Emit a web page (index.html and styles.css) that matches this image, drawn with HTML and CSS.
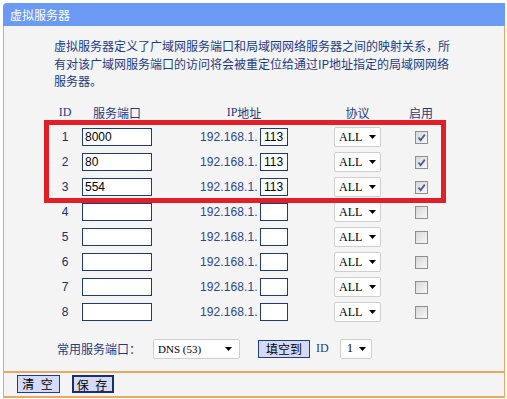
FILE: index.html
```html
<!DOCTYPE html>
<html lang="zh-CN">
<head>
<meta charset="utf-8">
<title>虚拟服务器</title>
<link rel="stylesheet" href="styles.css">
</head>
<body>
<div class="panel">
  <div class="header">虚拟服务器</div>
  <div class="content">
    <p class="intro">虚拟服务器定义了广域网服务端口和局域网网络服务器之间的映射关系，所<br>有对该广域网服务端口的访问将会被重定位给通过IP地址指定的局域网网络<br>服务器。</p>

    <div class="table">
      <div class="row head">
        <div class="c-id mono">ID</div>
        <div class="c-port">服务端口</div>
        <div class="c-ip"><span class="mono">IP</span>地址</div>
        <div class="c-proto">协议</div>
        <div class="c-en">启用</div>
      </div>

      <div class="row">
        <div class="c-id num">1</div>
        <div class="c-port"><input class="txt port" type="text" value="8000"></div>
        <div class="c-ip"><span class="ip">192.168.1.</span><input class="txt host" type="text" value="113"></div>
        <div class="c-proto"><div class="sel proto"><span>ALL</span><svg class="arr" width="7" height="4" viewBox="0 0 7 4"><path d="M0 0H7L3.5 4Z"/></svg></div></div>
        <div class="c-en"><span class="chk on"><svg width="11" height="11" viewBox="0 0 11 11"><path d="M2.5 5.5L4.6 8.2L8.8 2.6" fill="none" stroke="#4a5d92" stroke-width="1.8"/></svg></span></div>
      </div>
      <div class="row">
        <div class="c-id num">2</div>
        <div class="c-port"><input class="txt port" type="text" value="80"></div>
        <div class="c-ip"><span class="ip">192.168.1.</span><input class="txt host" type="text" value="113"></div>
        <div class="c-proto"><div class="sel proto"><span>ALL</span><svg class="arr" width="7" height="4" viewBox="0 0 7 4"><path d="M0 0H7L3.5 4Z"/></svg></div></div>
        <div class="c-en"><span class="chk on"><svg width="11" height="11" viewBox="0 0 11 11"><path d="M2.5 5.5L4.6 8.2L8.8 2.6" fill="none" stroke="#4a5d92" stroke-width="1.8"/></svg></span></div>
      </div>
      <div class="row">
        <div class="c-id num">3</div>
        <div class="c-port"><input class="txt port" type="text" value="554"></div>
        <div class="c-ip"><span class="ip">192.168.1.</span><input class="txt host" type="text" value="113"></div>
        <div class="c-proto"><div class="sel proto"><span>ALL</span><svg class="arr" width="7" height="4" viewBox="0 0 7 4"><path d="M0 0H7L3.5 4Z"/></svg></div></div>
        <div class="c-en"><span class="chk on"><svg width="11" height="11" viewBox="0 0 11 11"><path d="M2.5 5.5L4.6 8.2L8.8 2.6" fill="none" stroke="#4a5d92" stroke-width="1.8"/></svg></span></div>
      </div>
      <div class="row">
        <div class="c-id num">4</div>
        <div class="c-port"><input class="txt port" type="text" value=""></div>
        <div class="c-ip"><span class="ip">192.168.1.</span><input class="txt host" type="text" value=""></div>
        <div class="c-proto"><div class="sel proto"><span>ALL</span><svg class="arr" width="7" height="4" viewBox="0 0 7 4"><path d="M0 0H7L3.5 4Z"/></svg></div></div>
        <div class="c-en"><span class="chk"></span></div>
      </div>
      <div class="row">
        <div class="c-id num">5</div>
        <div class="c-port"><input class="txt port" type="text" value=""></div>
        <div class="c-ip"><span class="ip">192.168.1.</span><input class="txt host" type="text" value=""></div>
        <div class="c-proto"><div class="sel proto"><span>ALL</span><svg class="arr" width="7" height="4" viewBox="0 0 7 4"><path d="M0 0H7L3.5 4Z"/></svg></div></div>
        <div class="c-en"><span class="chk"></span></div>
      </div>
      <div class="row">
        <div class="c-id num">6</div>
        <div class="c-port"><input class="txt port" type="text" value=""></div>
        <div class="c-ip"><span class="ip">192.168.1.</span><input class="txt host" type="text" value=""></div>
        <div class="c-proto"><div class="sel proto"><span>ALL</span><svg class="arr" width="7" height="4" viewBox="0 0 7 4"><path d="M0 0H7L3.5 4Z"/></svg></div></div>
        <div class="c-en"><span class="chk"></span></div>
      </div>
      <div class="row">
        <div class="c-id num">7</div>
        <div class="c-port"><input class="txt port" type="text" value=""></div>
        <div class="c-ip"><span class="ip">192.168.1.</span><input class="txt host" type="text" value=""></div>
        <div class="c-proto"><div class="sel proto"><span>ALL</span><svg class="arr" width="7" height="4" viewBox="0 0 7 4"><path d="M0 0H7L3.5 4Z"/></svg></div></div>
        <div class="c-en"><span class="chk"></span></div>
      </div>
      <div class="row">
        <div class="c-id num">8</div>
        <div class="c-port"><input class="txt port" type="text" value=""></div>
        <div class="c-ip"><span class="ip">192.168.1.</span><input class="txt host" type="text" value=""></div>
        <div class="c-proto"><div class="sel proto"><span>ALL</span><svg class="arr" width="7" height="4" viewBox="0 0 7 4"><path d="M0 0H7L3.5 4Z"/></svg></div></div>
        <div class="c-en"><span class="chk"></span></div>
      </div>

      <div class="highlight"></div>
    </div>

    <div class="common">
      <span class="common-label">常用服务端口：</span>
      <div class="sel dns"><span>DNS (53)</span><svg class="arr" width="7" height="4" viewBox="0 0 7 4"><path d="M0 0H7L3.5 4Z"/></svg></div>
      <button class="btn fill" type="button">填空到</button>
      <span class="id-label mono">ID</span>
      <div class="sel idsel"><span>1</span><svg class="arr" width="7" height="4" viewBox="0 0 7 4"><path d="M0 0H7L3.5 4Z"/></svg></div>
    </div>
  </div>
  <div class="footer">
    <button class="btn act" type="button">清 空</button>
    <button class="btn act focus" type="button">保 存</button>
  </div>
</div>
</body>
</html>
```

FILE: styles.css
```css
* { box-sizing: border-box; }

html, body {
  margin: 0;
  padding: 0;
  background: #ffffff;
}

body {
  font-family: "Noto Sans CJK SC", "Liberation Sans", sans-serif;
  font-size: 12px;
  color: #1c3b88;
}

.panel {
  width: 502px;
  margin: 3px 0 0 3px;
}

.header {
  height: 23px;
  line-height: 23px;
  background: #6a9af4;
  color: #ffffff;
  font-size: 12px;
  padding-left: 7px;
  border-top-left-radius: 4px;
}

.content {
  background: #f4f4f4;
  border-left: 1px solid #e9a864;
  border-right: 1px solid #e9a864;
  border-bottom: 2px solid #e9a864;
  padding: 11px 0 10px 0;
}

.intro {
  margin: 0 0 10px 50px;
  line-height: 17.5px;
  font-size: 12px;
  color: #1c3b88;
}

.mono {
  font-family: "Liberation Serif", serif;
  font-size: 12px;
}

.table {
  position: relative;
}

.row {
  display: flex;
  align-items: center;
  height: 25px;
  padding-left: 48px;
}

.c-id {
  width: 26px;
  text-align: center;
}

.num {
  font-family: "Liberation Sans", sans-serif;
  font-size: 12px;
  color: #1c2c66;
}

.c-port {
  width: 70px;
  margin-left: 4px;
  text-align: center;
  display: flex;
  justify-content: center;
}

.c-ip {
  width: 88px;
  margin-left: 48px;
  display: flex;
  align-items: center;
  justify-content: center;
}

.c-proto {
  width: 47px;
  margin-left: 46px;
  display: flex;
  justify-content: center;
}

.c-en {
  width: 26px;
  margin-left: 27px;
  display: flex;
  justify-content: center;
}

.head .mono { color: #1c3b88; }

.ip {
  font-family: "Liberation Sans", sans-serif;
  font-size: 12px;
  letter-spacing: 0.1px;
  width: 60px;
  color: #2a4790;
}

.txt {
  appearance: none;
  -webkit-appearance: none;
  margin: 0;
  height: 18px;
  border: 1px solid #1f3b7e;
  border-radius: 0;
  background: #ffffff;
  padding: 0 2px;
  font-family: "Liberation Sans", sans-serif;
  font-size: 12px;
  color: #000000;
  outline: none;
}

.port { width: 70px; }
.host { width: 28px; margin-left: 0; padding: 0 3px; }

.sel {
  display: flex;
  align-items: center;
  justify-content: space-between;
  height: 20px;
  background: #ffffff;
  border: 1px solid #cfcfcf;
  border-radius: 2px;
  font-family: "Liberation Serif", serif;
  font-size: 12px;
  color: #000000;
  padding: 0 4px 0 4px;
}

.proto { width: 47px; }

.arr { display: block; fill: #000000; }

.chk {
  display: block;
  width: 13px;
  height: 13px;
  border: 1px solid #8f8f8f;
  background: linear-gradient(135deg, #d8d8d8, #f7f7f7);
  position: relative;
}

.chk svg {
  display: block;
  position: absolute;
  left: 0;
  top: 0;
}

.highlight {
  position: absolute;
  left: 40px;
  top: 20px;
  width: 402px;
  height: 83px;
  border: 5px solid #e21f27;
  pointer-events: none;
}

.common {
  display: flex;
  align-items: center;
  height: 24px;
  margin-top: 12px;
  padding-left: 53px;
}

.common-label {
  width: 96px;
  font-size: 12px;
}

.dns { width: 87px; font-size: 11px; padding-right: 7px; }

.btn {
  margin: 0;
  font-family: "Noto Sans CJK SC", sans-serif;
  font-size: 12px;
  color: #000000;
  background: #d5dbf7;
  border: 1px solid #1f3b8a;
  border-radius: 0;
  padding: 0;
  line-height: 16px;
  height: 18px;
}

.fill {
  width: 52px;
  margin-left: 18px;
}

.id-label {
  margin-left: 6px;
  width: 24px;
  color: #1c3b88;
}

.idsel { width: 32px; padding: 0 5px 0 6px; }

.footer {
  height: 25px;
  display: flex;
  align-items: center;
  padding-left: 13px;
  gap: 12px;
  background: #f4f4f4;
  border-left: 1px solid #e9a864;
  border-right: 1px solid #e9a864;
  border-bottom: 2px solid #e9a864;
}

.act {
  width: 43px;
  height: 18px;
  letter-spacing: 2px;
}

.focus {
  border: 2px solid #1b2e66;
  width: 42px;
}
```
